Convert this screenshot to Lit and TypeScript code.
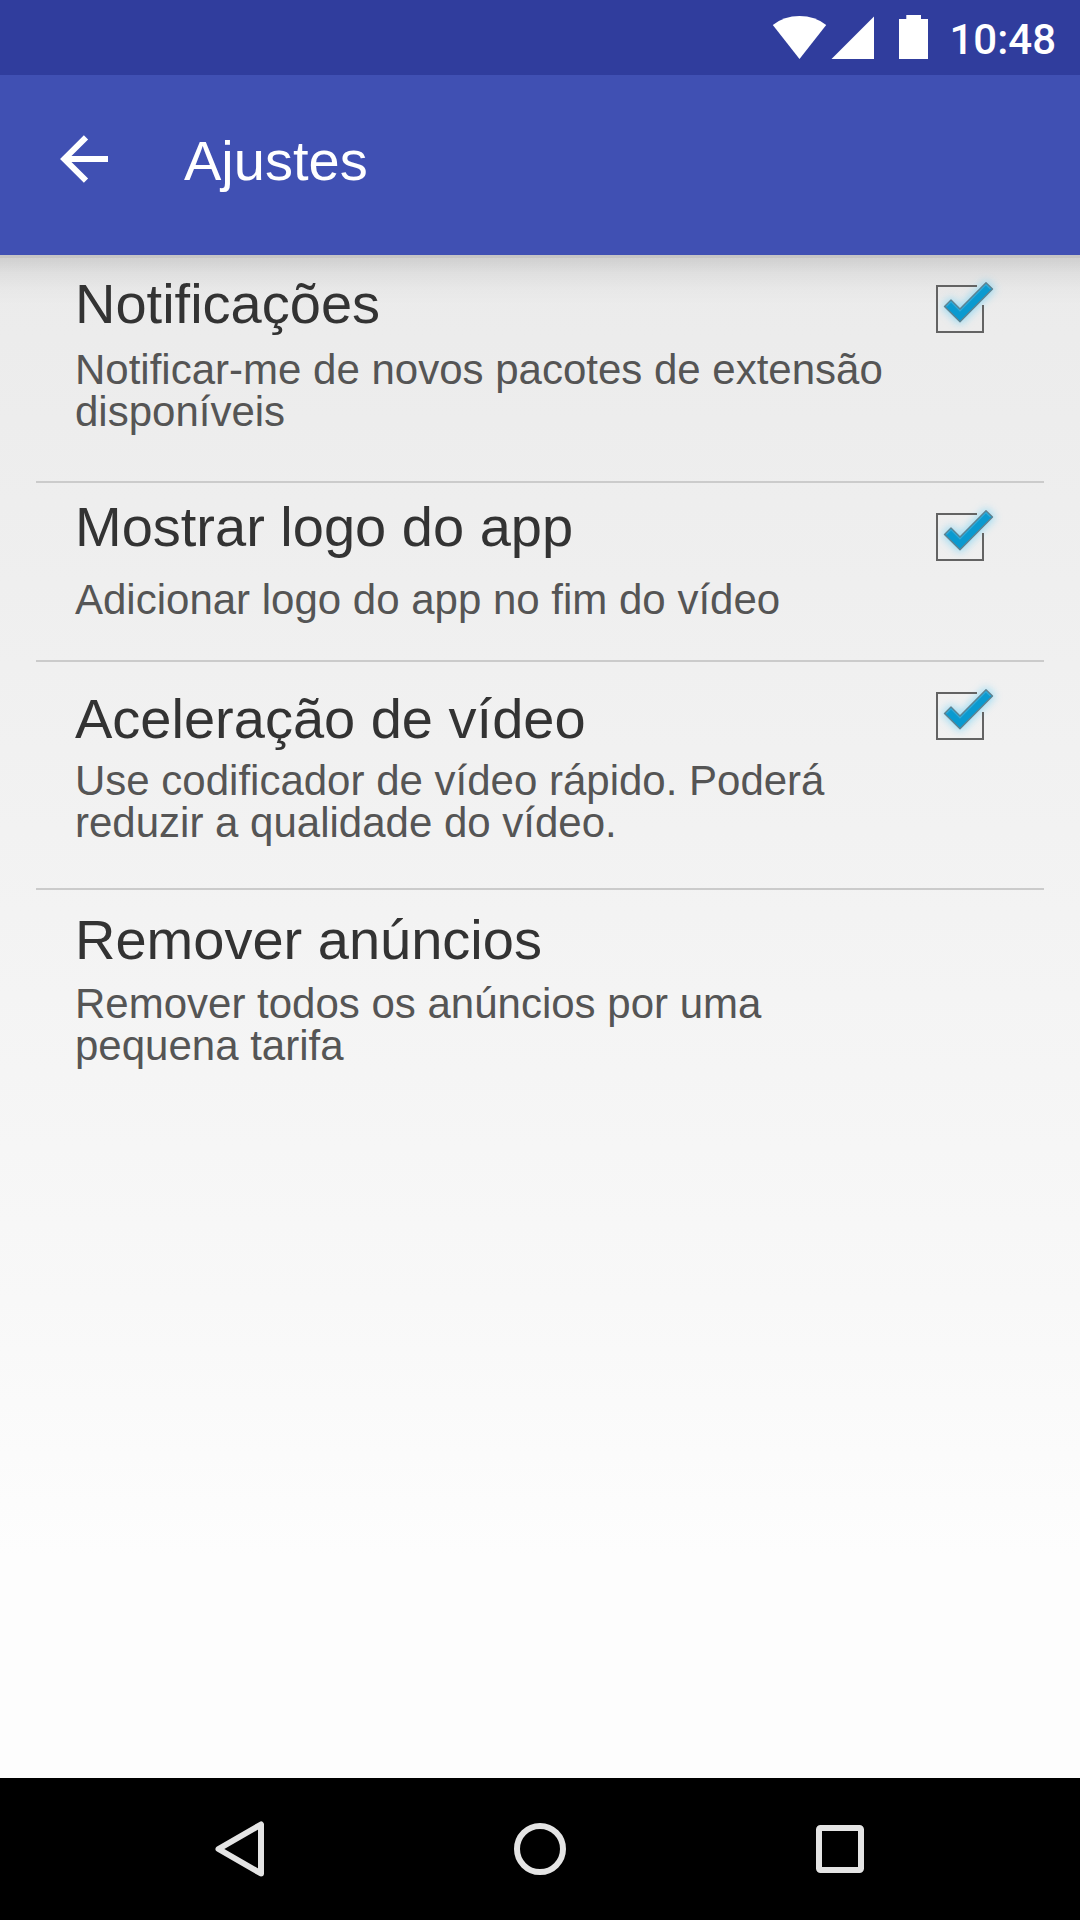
import { LitElement, html, css, svg, nothing } from "lit";
import { customElement, property } from "lit/decorators.js";

@customElement("status-bar")
class StatusBar extends LitElement {
  static styles = css`
    :host {
      display: flex;
      justify-content: flex-end;
      align-items: center;
      height: 75px;
      padding-right: 24px;
      background: #303d9d;
      color: #fff;
      box-sizing: border-box;
    }
    .icons {
      width: 160px;
      height: 75px;
    }
    .clock {
      margin-left: 17px;
      font: 500 42px/75px Roboto, sans-serif;
      padding-top: 3px;
    }
  `;
  render() {
    return html`
      <svg class="icons" viewBox="772 0 160 75" fill="#fff">
        <path d="M772.8 25Q784 16 799.5 16T826.2 25L799.5 59Z" />
        <path d="M831.5 59H874V16.5Z" />
        <path d="M906.3 15H921V19H928V59H899V19H906.3Z" />
      </svg>
      <span class="clock">10:48</span>
    `;
  }
}

@customElement("app-bar")
class AppBar extends LitElement {
  @property() heading = "";
  static styles = css`
    :host {
      display: flex;
      align-items: center;
      height: 180px;
      padding: 0 60px;
      box-sizing: border-box;
      background: #4050b3;
      color: #fff;
    }
    .back {
      width: 48px;
      height: 48px;
      margin-bottom: 12px;
    }
    .heading {
      margin: 0 0 9px 76px;
      font: 400 56px/64px "Liberation Sans", sans-serif;
    }
  `;
  render() {
    return html`
      <svg class="back" viewBox="60 135 48 48" fill="none" stroke="#fff" stroke-width="6">
        <path d="M86 137.3L64.3 159L86 180.7M64 159H108" />
      </svg>
      <h1 class="heading">${this.heading}</h1>
    `;
  }
}

@customElement("check-mark")
class CheckMark extends LitElement {
  static styles = css`
    :host {
      display: block;
    }
    .box {
      display: block;
      width: 90px;
      height: 80px;
    }
  `;
  render() {
    const tick = "M24.5 36.5L31 30L40 39L66 12.8L72.5 19L40 51.8Z";
    return html`
      <svg class="box" viewBox="0 0 90 80">
        <defs>
          <filter id="glow" x="-50%" y="-50%" width="200%" height="200%">
            <feGaussianBlur stdDeviation="4.5" />
          </filter>
        </defs>
        <path d=${tick} fill="#6fd0f5" stroke="#6fd0f5" stroke-width="4" opacity=".7" filter="url(#glow)" />
        <path d="M57 16H17V62H63V35" fill="none" stroke="#636363" stroke-width="2" />
        <path d=${tick} fill="#0a9ad0" stroke="#5f8290" stroke-width="1.4" stroke-linejoin="round" />
        <path d="M26.4 36.5L31 31.9L40 40.9L66 14.7L70.5 19" fill="none" stroke="#4fb3da" stroke-width="1.2" opacity=".6" />
      </svg>
    `;
  }
}

interface Setting {
  kind: string;
  title: string;
  lines: string[];
  checked?: boolean;
}

const SETTINGS: Setting[] = [
  {
    kind: "notify",
    title: "Notificações",
    lines: ["Notificar-me de novos pacotes de extensão", "disponíveis"],
    checked: true,
  },
  {
    kind: "logo",
    title: "Mostrar logo do app",
    lines: ["Adicionar logo do app no fim do vídeo"],
    checked: true,
  },
  {
    kind: "speed",
    title: "Aceleração de vídeo",
    lines: ["Use codificador de vídeo rápido. Poderá", "reduzir a qualidade do vídeo."],
    checked: true,
  },
  {
    kind: "ads",
    title: "Remover anúncios",
    lines: ["Remover todos os anúncios por uma", "pequena tarifa"],
  },
];

@customElement("nav-bar")
class NavBar extends LitElement {
  static styles = css`
    :host {
      display: flex;
      justify-content: center;
      align-items: center;
      gap: 240px;
      height: 142px;
      background: #000;
    }
    .key {
      width: 60px;
      height: 60px;
    }
  `;
  private key(shape: unknown) {
    return html`<svg class="key" viewBox="0 0 60 60" fill="none" stroke="#e4e4e4" stroke-width="6">${shape}</svg>`;
  }
  render() {
    return html`
      ${this.key(svg`<path d="M51 5.5V54.5L8.5 30Z" stroke-linejoin="round" />`)}
      ${this.key(svg`<circle cx="30" cy="30" r="23" />`)}
      ${this.key(svg`<rect x="9" y="9" width="42" height="42" rx="1.5" />`)}
    `;
  }
}

@customElement("app-root")
class AppRoot extends LitElement {
  static styles = css`
    :host {
      display: flex;
      flex-direction: column;
      width: 1080px;
      height: 1920px;
      overflow: hidden;
      font-family: "Liberation Sans", sans-serif;
    }
    .content {
      flex: 1;
      padding: 0 36px;
      background:
        linear-gradient(#c5c5c5 0 3px, transparent 3px),
        linear-gradient(rgba(0, 0, 0, 0.13) 0, rgba(0, 0, 0, 0.05) 18px, rgba(0, 0, 0, 0.015) 34px, transparent 50px),
        linear-gradient(#ebebeb 0, #f4f4f4 740px, #f8f8f8 1045px, #fdfdfd 1300px, #fdfdfd 100%);
    }
    .row {
      display: flex;
      justify-content: space-between;
      height: 226px;
      padding: 21px 34px 0 39px;
      box-sizing: border-box;
    }
    .row + .row {
      border-top: 2px solid #cbcbcb;
    }
    .text {
      display: flex;
      flex-direction: column;
      gap: 17px;
    }
    .title {
      margin: 0;
      font-size: 56px;
      font-weight: 400;
      line-height: 56px;
      color: #333;
    }
    .summary {
      margin: 0;
      font-size: 42px;
      line-height: 42px;
      color: #555;
      white-space: nowrap;
    }
    .check {
      margin-top: -6px;
    }
    .logo {
      height: 179px;
      padding-top: 16px;
    }
    .logo .text {
      gap: 24px;
    }
    .logo .check {
      margin-top: -1px;
    }
    .speed {
      height: 228px;
      padding-top: 29px;
    }
    .speed .text {
      gap: 13px;
    }
    .speed .check {
      margin-top: -14px;
    }
    .ads {
      padding-top: 22px;
    }
    .ads .text {
      gap: 15px;
    }
  `;
  render() {
    return html`
      <status-bar></status-bar>
      <app-bar heading="Ajustes"></app-bar>
      <main class="content">
        ${SETTINGS.map(
          (s) => html`
            <section class="row ${s.kind}">
              <div class="text">
                <h2 class="title">${s.title}</h2>
                <p class="summary">${s.lines.map((line, i) => html`${i ? html`<br />` : nothing}${line}`)}</p>
              </div>
              ${s.checked ? html`<check-mark class="check"></check-mark>` : nothing}
            </section>
          `,
        )}
      </main>
      <nav-bar></nav-bar>
    `;
  }
}
